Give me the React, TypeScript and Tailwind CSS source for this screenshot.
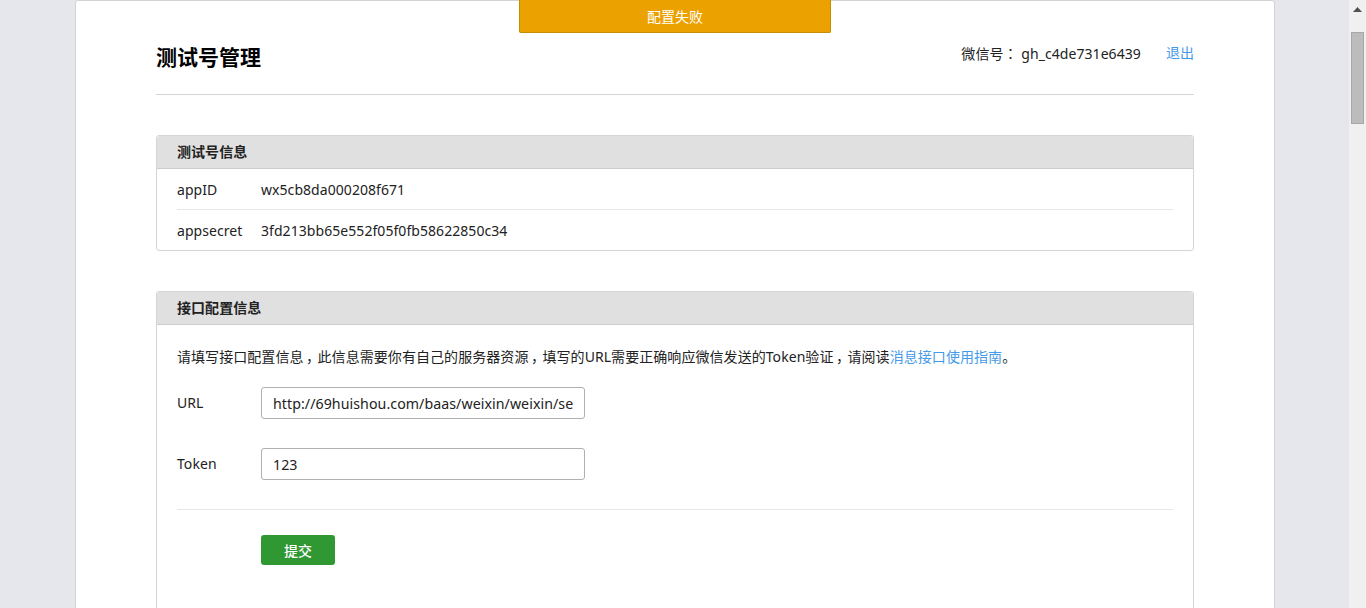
import React from "react";

const font = "font-['Noto_Sans','Noto_Sans_CJK_SC',sans-serif]";

const Panel = ({ title, children }: { title: string; children: React.ReactNode }) => (
  <section className="rounded-[3px] border border-[#d5d5d5]">
    <h3 className="h-[33px] rounded-t-[3px] border-b border-[#cdcdcd] bg-[#e0e0e0] pl-5 text-[14px] leading-[31px] font-bold text-[#222]">
      {title}
    </h3>
    {children}
  </section>
);

const Row = ({ label, value }: { label: string; value: string }) => (
  <div className="flex h-10 items-center">
    <span className="w-[84px]">{label}</span>
    <span>{value}</span>
  </div>
);

const Field = ({ label, value }: { label: string; value: string }) => (
  <div className="flex h-8">
    <label className="w-[84px] leading-[32px]">{label}</label>
    <input
      readOnly
      value={value}
      className="h-8 w-[324px] rounded-[3px] border border-[#b0b0b0] px-[11px] text-[14.2px] text-[#222] outline-none"
    />
  </div>
);

// the reference font sets full-width commas nearer the middle of their box
const Comma = () => <span className="inline-block w-[14px] text-center [font-feature-settings:'palt']">，</span>;

export default function App() {
  return (
    <div className={`flex h-[608px] overflow-hidden bg-[#e6e7ec] text-[14px] tracking-[0.06px] text-[#222] ${font}`}>
      <div className="relative flex-1 pl-[75px]">
        <div className="absolute top-0 left-[519px] h-[33px] w-[312px] rounded-b-[2px] border-x border-b border-[#c68e04] bg-[#eba100] text-center text-[14px] leading-[33px] tracking-normal text-white">
          配置失败
        </div>
        <div className="h-[700px] w-[1200px] rounded-[3px] border border-[#d3d3d3] bg-white px-20">
          <header className="flex h-[94px] items-start justify-between border-b border-[#d5d5d5]">
            <h1 className="mt-[40px] text-[21px] leading-[32px] font-bold tracking-normal text-black">测试号管理</h1>
            <div className="mt-[40px] flex leading-[24px]">
              <span>
                微信号<span className="font-['Noto_Sans_CJK_TC',sans-serif]">：</span> gh_c4de731e6439
              </span>
              <a className="ml-[25px] text-[#459ae9]">退出</a>
            </div>
          </header>
          <div className="mt-10">
            <Panel title="测试号信息">
              <div className="px-5">
                <div className="border-b border-[#e7e7e7]">
                  <Row label="appID" value="wx5cb8da000208f671" />
                </div>
                <Row label="appsecret" value="3fd213bb65e552f05f0fb58622850c34" />
              </div>
            </Panel>
          </div>
          <div className="mt-10">
            <Panel title="接口配置信息">
              <div className="px-5 pt-[21px]">
                <p className="leading-[22px]">
                  请填写接口配置信息<Comma />此信息需要你有自己的服务器资源<Comma />填写的URL需要正确响应微信发送的Token验证<Comma />请阅读
                  <a className="text-[#459ae9]">消息接口使用指南</a>。
                </p>
                <div className="mt-[19px] flex flex-col gap-[29px]">
                  <Field label="URL" value="http://69huishou.com/baas/weixin/weixin/se" />
                  <Field label="Token" value="123" />
                </div>
                <div className="mt-[29px] border-t border-[#e7e7e7] pt-[25px] pl-[84px]">
                  <button className="h-[30px] w-[74px] rounded-[3px] bg-[#2f9833] text-[14px] font-medium tracking-normal text-white">
                    提交
                  </button>
                </div>
                <div className="h-[200px]" />
              </div>
            </Panel>
          </div>
        </div>
      </div>
      <div className="flex w-[17px] flex-col items-center bg-[#f0f0f0]">
        <svg width="9" height="5" viewBox="0 0 9 5" className="mt-[7px] mb-[20px] fill-[#505050]">
          <path d="M4.5 0 9 5H0z" />
        </svg>
        <div className="h-[92px] w-[13px] border border-[#a8a8a8] bg-[#bcbcbc]" />
      </div>
    </div>
  );
}
